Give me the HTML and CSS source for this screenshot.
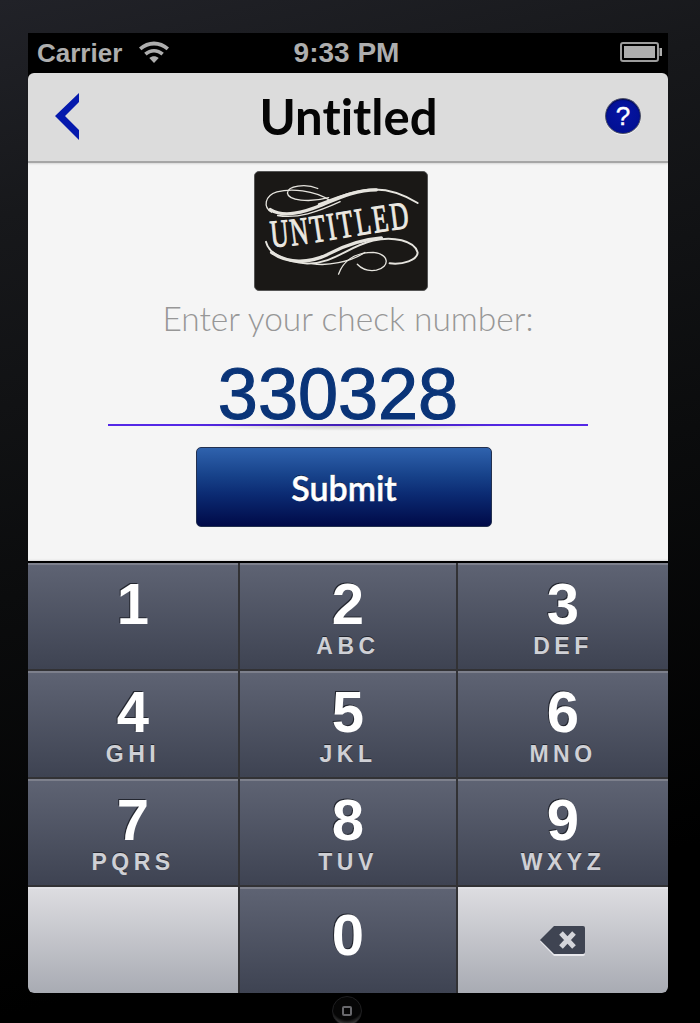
FILE: index.html
```html
<!DOCTYPE html>
<html lang="en">
<head>
<meta charset="utf-8">
<title>Untitled</title>
<link rel="stylesheet" href="styles.css">
</head>
<body>
<main class="device">
  <div class="screen">
    <header class="status">
      <div class="status-left">
        <span>Carrier</span>
        <svg class="wifi" viewBox="0 0 32 24" aria-hidden="true">
          <path d="M1 8.500C9.500 .5 22.500 .5 31 8.500L28.600 11.300C21.400 4.800 10.600 4.800 3.400 11.300Z"/>
          <path d="M6.200 13.800C12 8.600 20 8.600 25.800 13.800L23.400 16.500C18.900 12.600 13.100 12.600 8.600 16.500Z"/>
          <path d="M11.300 19C14.200 16.500 17.800 16.500 20.700 19L16 24Z"/>
        </svg>
      </div>
      <span class="clock">9:33 PM</span>
      <svg class="battery" viewBox="0 0 42 20" aria-hidden="true">
        <rect class="battery-shell" x="1" y="1" width="37" height="18" rx="2"/>
        <rect class="battery-fill" x="4" y="4" width="31" height="12"/>
        <rect class="battery-fill" x="39.500" y="6" width="2.500" height="8"/>
      </svg>
    </header>

    <nav class="navbar">
      <svg class="back" viewBox="0 0 24 47" aria-hidden="true">
        <polygon points="0,23 24,0 24,9 10,23 24,37 24,47"/>
      </svg>
      <h1 class="title">Untitled</h1>
      <span class="help">?</span>
    </nav>

    <section class="content">
      <svg class="logo" viewBox="42 18 521 358" role="img" aria-label="Untitled logo">
        <g class="flourish">
          <path class="w7" d="M88 132C130 158 190 140 245 118C300 95 350 72 410 72"/>
          <path class="w4" d="M535 112C490 84 440 66 385 72C320 80 280 100 235 116"/>
          <path class="w3" d="M92 140C66 125 70 90 108 78C150 68 220 72 270 105"/>
          <path class="w3" d="M265 96C205 112 142 104 140 82C140 60 195 52 232 68"/>
          <path class="w3" d="M110 150C170 160 230 140 300 108"/>
          <path class="w7" d="M92 262C140 296 205 296 262 268C315 240 365 222 425 218"/>
          <path class="w4" d="M75 230C84 268 135 290 200 296C280 296 320 246 400 226C460 212 525 226 535 262C535 285 490 300 450 295"/>
          <path class="w3" d="M295 328C308 292 340 262 400 262C450 268 452 305 410 316C385 320 365 312 352 298"/>
          <path class="w3" d="M215 296C260 304 330 292 375 262"/>
        </g>
        <defs><path id="logo-arc" d="M92 246C220 238 390 200 522 186"/></defs>
        <text class="logo-word"><textPath href="#logo-arc" textLength="430" lengthAdjust="spacingAndGlyphs">UNTITLED</textPath></text>
      </svg>
      <p class="prompt">Enter your check number:</p>
      <div class="entry"><span class="entry-value">330328</span></div>
      <button class="submit" type="button">Submit</button>
    </section>

    <section class="keypad">
      <div class="key"><span class="digit">1</span></div>
      <div class="key"><span class="digit">2</span><span class="letters">ABC</span></div>
      <div class="key"><span class="digit">3</span><span class="letters">DEF</span></div>
      <div class="key"><span class="digit">4</span><span class="letters">GHI</span></div>
      <div class="key"><span class="digit">5</span><span class="letters">JKL</span></div>
      <div class="key"><span class="digit">6</span><span class="letters">MNO</span></div>
      <div class="key"><span class="digit">7</span><span class="letters">PQRS</span></div>
      <div class="key"><span class="digit">8</span><span class="letters">TUV</span></div>
      <div class="key"><span class="digit">9</span><span class="letters">WXYZ</span></div>
      <div class="key key-light key-bl"></div>
      <div class="key key-zero"><span class="digit">0</span></div>
      <div class="key key-light key-br">
        <svg class="delete" viewBox="0 0 46 32" aria-hidden="true">
          <path class="delete-edge" d="M14 2H43a2 2 0 0 1 2 2V29a2 2 0 0 1-2 2H14L0 16.500Z"/>
          <path class="delete-body" d="M14 1H43a2 2 0 0 1 2 2V27a2 2 0 0 1-2 2H14L0 15Z"/>
          <path class="delete-x" d="M21 8L34 22M34 8L21 22"/>
        </svg>
      </div>
    </section>
  </div>
  <div class="home"><span class="home-square"></span></div>
</main>
</body>
</html>
```
FILE: styles.css
```css
* { box-sizing: border-box; }

html, body { margin: 0; height: 100%; }

body {
  width: 700px;
  height: 1023px;
  overflow: hidden;
  background: linear-gradient(166deg, #212228 0, #17181b 18%, #0b0c0d 50%, #000 85%);
  font-family: "Liberation Sans", Arial, sans-serif;
}

.device {
  display: flex;
  flex-direction: column;
  align-items: flex-start;
  padding: 33px 32px 0 28px;
  height: 1023px;
  overflow: hidden;
}

.screen {
  width: 640px;
  height: 960px;
  display: flex;
  flex-direction: column;
  background: #000;
  flex: none;
}

/* status bar */
.status {
  height: 40px;
  flex: none;
  display: grid;
  grid-template-columns: 1fr auto 1fr;
  align-items: center;
  padding: 0 6px 0 9px;
  color: #aeaeae;
  font-size: 26px;
  font-weight: 700;
  background: #000;
}
.status-left { display: flex; align-items: center; gap: 16px; }
.clock { font-size: 28px; position: relative; left: -3px; }
.wifi { width: 32px; height: 24px; fill: #aeaeae; margin-top: -4px; }
.battery { width: 42px; height: 20px; justify-self: end; margin-top: -2px; }
.battery-shell { fill: none; stroke: #9c9c9c; stroke-width: 2; }
.battery-fill { fill: #aeaeae; }

/* navigation bar */
.navbar {
  position: relative;
  z-index: 2;
  height: 90px;
  flex: none;
  display: flex;
  align-items: center;
  justify-content: space-between;
  padding: 0 27px 2px 27px;
  background: #dcdcdc;
  border-bottom: 2px solid #a6a6a6;
  border-radius: 6px 6px 0 0;
  box-shadow: 0 1px 2px rgba(0, 0, 0, .12);
}
.back { width: 24px; height: 47px; fill: #0519ad; }
.title {
  margin: 0;
  position: absolute;
  left: 1px;
  right: 0;
  top: 15px;
  text-align: center;
  font-family: Lato, sans-serif;
  font-size: 49px;
  line-height: 56px;
  font-weight: 700;
  font-variant-ligatures: none;
  color: #050505;
  pointer-events: none;
}
.help {
  width: 36px;
  height: 36px;
  border-radius: 50%;
  display: flex;
  align-items: center;
  justify-content: center;
  background: radial-gradient(circle at 50% 40%, #0614a4, #000e8c);
  border: 1px solid #4b4f66;
  box-shadow: inset 0 1px 1px rgba(0, 0, 0, .5), 0 1px 0 rgba(255, 255, 255, .6);
  color: #fff;
  font-size: 26px;
  font-weight: 400;
  line-height: 1;
  -webkit-text-stroke: .4px #fff;
}

/* content */
.content {
  height: 398px;
  flex: none;
  background: #f5f5f5;
  display: flex;
  flex-direction: column;
  align-items: center;
  padding-top: 8px;
  box-shadow: inset 0 -2px 2px -1px rgba(0, 0, 0, .1);
}
.logo {
  width: 174px;
  height: 120px;
  flex: none;
  margin-left: -14px;
  background: #1a1816;
  border: 1px solid #555;
  border-radius: 5px;
}
.flourish path { fill: none; stroke: #e6e4de; stroke-linecap: round; }
.w7 { stroke-width: 10; }
.w4 { stroke-width: 6; }
.w3 { stroke-width: 4; }
.logo-word {
  font-family: "Liberation Serif", serif;
  font-size: 118px;
  font-weight: 400;
  letter-spacing: 10px;
  fill: #ece9e2;
  stroke: #ece9e2;
  stroke-width: 3;
}
.prompt {
  margin: 6px 0 0;
  width: 100%;
  text-align: center;
  font-family: Lato, sans-serif;
  font-weight: 300;
  font-size: 33.500px;
  line-height: 42px;
  color: #979797;
}
.entry {
  position: relative;
  width: 480px;
  height: 65px;
  margin-top: 22px;
  padding-right: 20px;
  text-align: center;
  border-bottom: 2px solid #5428e6;
}
.entry::after {
  content: "";
  position: absolute;
  left: 15%;
  right: 15%;
  top: 63px;
  height: 7px;
  background: radial-gradient(ellipse at 50% 0, rgba(0, 0, 0, .24), rgba(0, 0, 0, 0) 70%);
}
.entry-value {
  display: block;
  font-size: 72px;
  line-height: 66px;
  color: #0a3478;
  -webkit-text-stroke: 1.100px #0a3478;
}
.submit {
  width: 296px;
  height: 80px;
  margin: 21px 0 0 -8px;
  flex: none;
  border: 1px solid #23304f;
  border-radius: 5px;
  background: linear-gradient(#2f62ad, #17428a 35%, #0b2a72 60%, #000a48);
  color: #fff;
  font-family: Lato, sans-serif;
  font-size: 34px;
  font-weight: 600;
  -webkit-text-stroke: .4px #fff;
  text-shadow: 0 -1px 0 rgba(0, 0, 0, .6);
  padding: 0;
}

/* keypad */
.keypad {
  flex: 1;
  display: grid;
  grid-template-columns: 210px 216px 210px;
  grid-template-rows: repeat(4, 106px);
  gap: 2px;
  background: #323235;
  border-top: 2px solid #000;
  border-radius: 0 0 6px 6px;
  overflow: hidden;
}
.key {
  display: flex;
  flex-direction: column;
  align-items: center;
  background: linear-gradient(#5e6373, #3e4352);
  border-top: 2px solid #7d808c;
  color: #fff;
  padding-top: 6px;
}
.digit {
  font-size: 58px;
  font-weight: 700;
  line-height: 66px;
  text-shadow: -1px -1px 0 #23262f;
}
.letters {
  font-size: 23px;
  font-weight: 700;
  line-height: 24px;
  margin-top: -3px;
  letter-spacing: 4.500px;
  color: #cfd0d5;
  text-shadow: 0 -1px 0 #23262f;
}
.key-zero .digit { margin-top: 7px; }
.key-light {
  background: linear-gradient(#dcdce0, #a8abb3);
  border-top-color: #e2e2e6;
  justify-content: center;
  padding-top: 0;
}
.key-bl { border-bottom-left-radius: 6px; }
.key-br { border-bottom-right-radius: 6px; }
.delete { width: 46px; height: 32px; }
.delete-edge { fill: #e8e8ec; }
.delete-body { fill: #3f4452; }
.delete-x { fill: none; stroke: #d4d5da; stroke-width: 5; }

/* home button */
.home {
  width: 30px;
  height: 30px;
  margin: 3px 0 0 304px;
  flex: none;
  border-radius: 50%;
  background: radial-gradient(circle at 50% 25%, #060606 62%, #3c3c3c 80%);
  border: 1px solid #1e1e20;
  display: flex;
  align-items: center;
  justify-content: center;
}
.home-square {
  width: 10px;
  height: 10px;
  border: 2px solid #68686c;
  border-radius: 2px;
}
```
